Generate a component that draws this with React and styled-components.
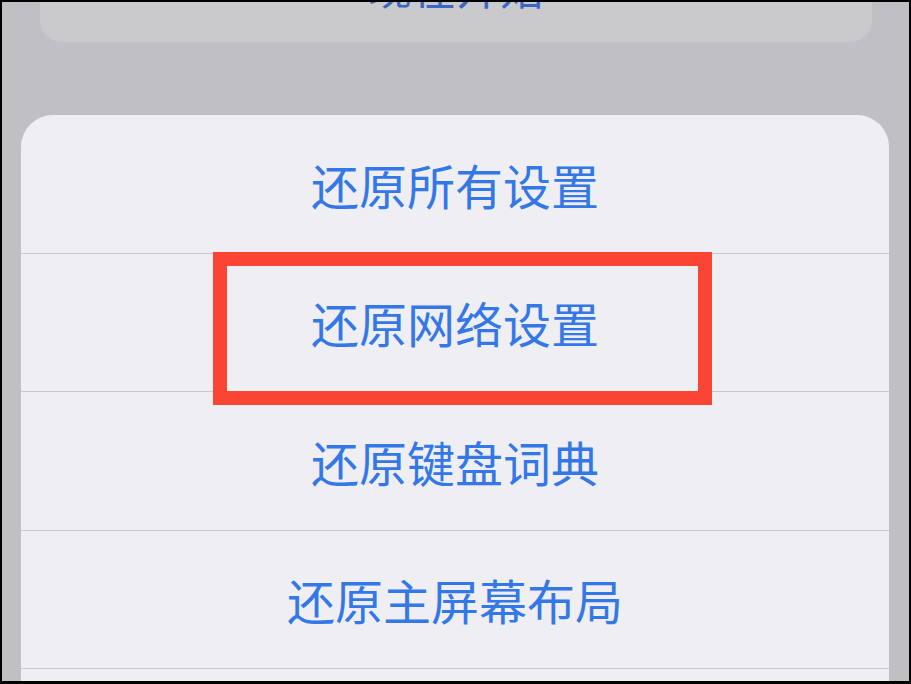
import React from 'react';
import styled, { createGlobalStyle } from 'styled-components';

const GlobalStyle = createGlobalStyle`
  html, body {
    margin: 0;
    padding: 0;
    background: #000;
  }
  body {
    font-family: "Noto Sans CJK SC", "Noto Sans", sans-serif;
  }
`;

const Frame = styled.div`
  width: 911px;
  height: 684px;
  box-sizing: border-box;
  border-style: solid;
  border-color: #000;
  border-width: 2px 2px 3px 2px;
  background: #c0bfc4;
  overflow: hidden;
  display: flex;
  flex-direction: column;
`;

const BackCard = styled.div`
  margin: 0 37px 0 38px;
  height: 40px;
  flex-shrink: 0;
  background: #cacacc;
  border-radius: 0 0 22px 22px;
  display: flex;
  justify-content: center;
  overflow: hidden;
`;

const BackLabel = styled.span`
  margin-top: -40px;
  font-size: 44px;
  line-height: 48px;
  color: #3b67c4;
  white-space: nowrap;
`;

const Sheet = styled.div`
  position: relative;
  margin: 73px 20px 0 19px;
  background: #efeff3;
  border-radius: 32px 32px 0 0;
  flex: 1;
  display: flex;
  flex-direction: column;
`;

const Row = styled.div`
  height: 138.5px;
  flex-shrink: 0;
  box-sizing: border-box;
  border-bottom: 1px solid #c8c8cc;
  display: flex;
  align-items: center;
  justify-content: center;
  font-size: 48px;
  color: #3478e8;
  letter-spacing: 0;
`;

const Highlight = styled.div`
  position: absolute;
  left: 192px;
  top: 137px;
  width: 499px;
  height: 153px;
  box-sizing: border-box;
  border: 14px solid #fa4434;
  pointer-events: none;
`;

const items = ['还原所有设置', '还原网络设置', '还原键盘词典', '还原主屏幕布局'];

const App = () => {
  return (
    <>
      <GlobalStyle />
      <Frame>
        <BackCard>
          <BackLabel>现在开始</BackLabel>
        </BackCard>
        <Sheet>
          {items.map((label) => (
            <Row key={label}>{label}</Row>
          ))}
          <Row />
          <Highlight />
        </Sheet>
      </Frame>
    </>
  );
};

export default App;
